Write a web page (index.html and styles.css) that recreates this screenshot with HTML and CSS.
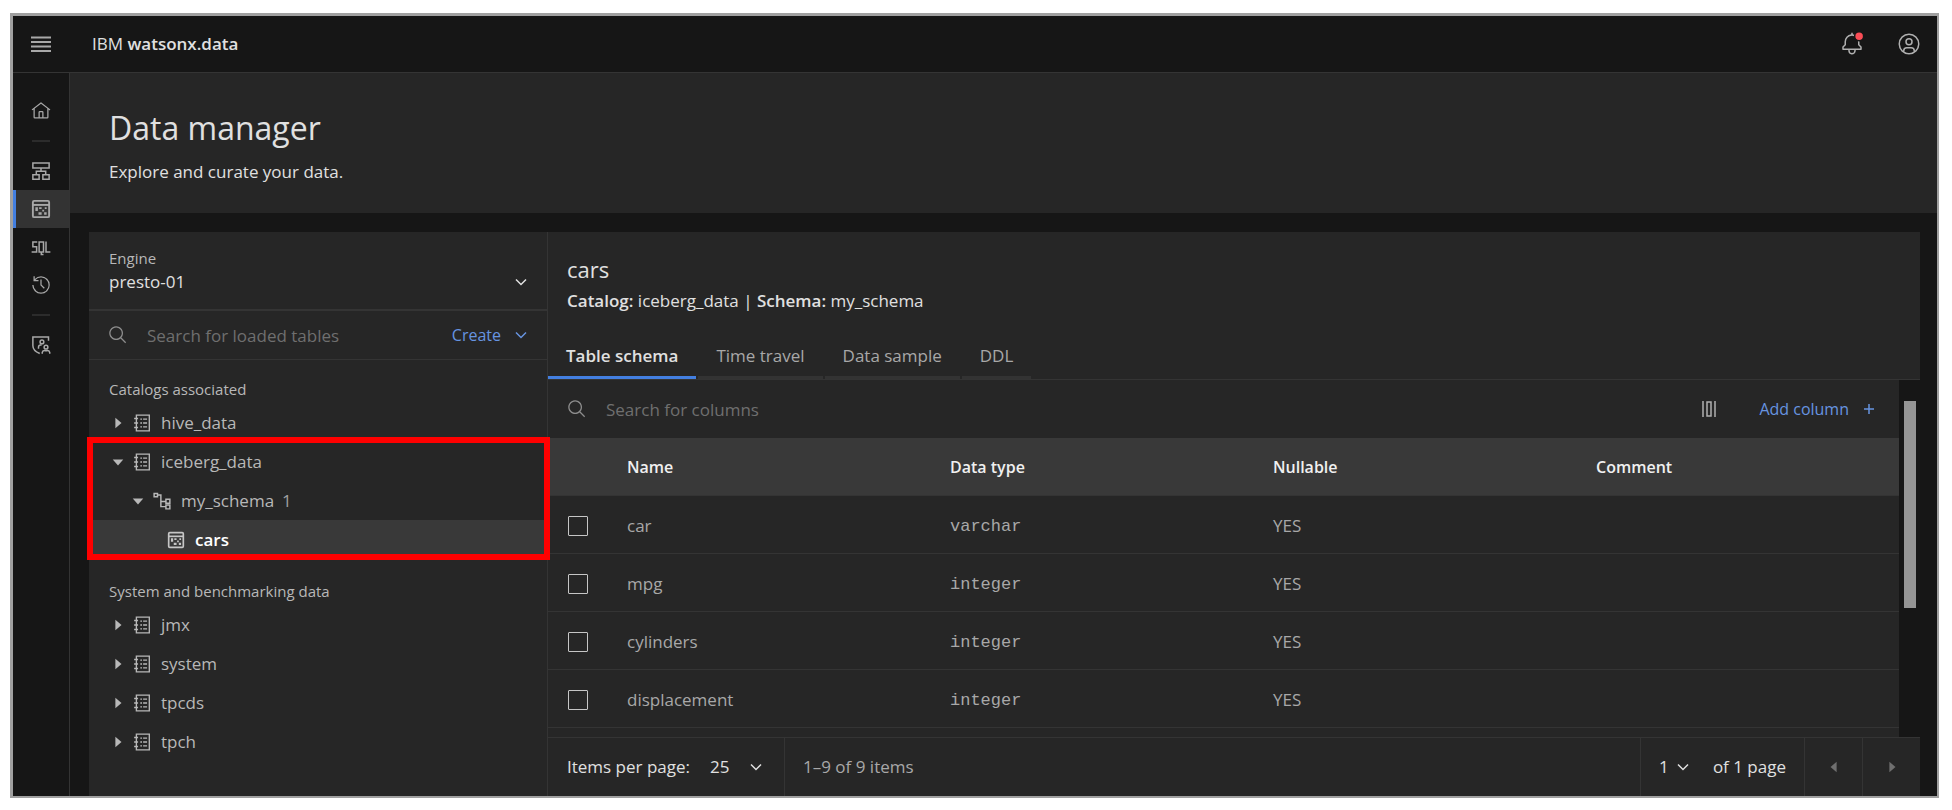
FILE: index.html
```html
<!DOCTYPE html>
<html lang="en">
<head>
<meta charset="utf-8">
<meta name="viewport" content="width=device-width, initial-scale=1">
<title>Data manager - IBM watsonx.data</title>
<link rel="stylesheet" href="styles.css">
</head>
<body>
<svg class="sprite" aria-hidden="true">
  <symbol id="i-chevron" viewBox="0 0 16 16"><path d="M3 5.500 8 10.500 13 5.500" fill="none" stroke="currentColor" stroke-width="1.500"/></symbol>
  <symbol id="i-search" viewBox="0 0 32 32"><path d="M29,27.5859l-7.5521-7.5521a11.0177,11.0177,0,1,0-1.4141,1.4141L27.5859,29ZM4,13a9,9,0,1,1,9,9A9.01,9.01,0,0,1,4,13Z"/></symbol>
  <symbol id="i-catalog" viewBox="0 0 32 32"><path d="M6 2H29V30H6Z M2 8H9 M2 16H9 M2 24H9 M13 9H16 M18 9H25 M13 16H16 M18 16H25 M13 23H16 M18 23H25" fill="none" stroke="currentColor" stroke-width="2.400"/></symbol>
  <symbol id="i-table" viewBox="0 0 32 32"><rect x="3" y="3" width="26" height="26" rx="2" fill="none" stroke="currentColor" stroke-width="3"/><path d="M3 9.500H29" stroke="currentColor" stroke-width="3"/><path d="M7 13H11V19H7Z M13 13H17V16H13Z M18 17H21V20H18Z M22 13H25V16H22Z M12 21H17V25H12Z M21 21H25V25H21Z"/></symbol>
  <symbol id="i-schema" viewBox="0 0 32 32"><path d="M2 2.500H8V8.500H2Z M8 5.500H14V26H23 M14 17H23 M23 13H30V20H23Z M23 23H30V30H23Z" fill="none" stroke="currentColor" stroke-width="2.600"/></symbol>
  <symbol id="i-right" viewBox="0 0 16 16"><path d="M5 2 12 8 5 14Z"/></symbol>
  <symbol id="i-down" viewBox="0 0 16 16"><path d="M2 5 14 5 8 12Z"/></symbol>
  <symbol id="i-left" viewBox="0 0 16 16"><path d="M11 2 4 8 11 14Z"/></symbol>
</svg>

<div class="app">
  <header class="topbar">
    <button class="topbar-menu" type="button" aria-label="Menu">
      <svg class="icon-20" viewBox="0 0 20 20"><path d="M0 3.500H20M0 8H20M0 12.500H20M0 17H20" stroke="currentColor" stroke-width="2"/></svg>
    </button>
    <a class="brand" href="#">IBM <b>watsonx.data</b></a>
    <div class="topbar-actions">
      <button class="icon-button" type="button" aria-label="Notifications">
        <svg class="icon-24" viewBox="0 0 32 32"><path d="M28.7071,19.293,26,16.5859V13a10.0136,10.0136,0,0,0-9-9.9492V1H15V3.0508A10.0136,10.0136,0,0,0,6,13v3.5859L3.2929,19.293A1,1,0,0,0,3,20v3a1,1,0,0,0,1,1h7v.7768a5.152,5.152,0,0,0,4.5,5.1987A5.0057,5.0057,0,0,0,21,25V24h7a1,1,0,0,0,1-1V20A1,1,0,0,0,28.7071,19.293ZM19,25a3,3,0,0,1-6,0V24h6Zm8-3H5V20.4141L7.707,17.707A1,1,0,0,0,8,17V13a8,8,0,0,1,16,0v4a1,1,0,0,0,.293.707L27,20.4141Z"/><circle class="dot" cx="25.500" cy="5.500" r="6"/></svg>
      </button>
      <button class="icon-button" type="button" aria-label="Account">
        <svg class="icon-24" viewBox="0 0 32 32"><path d="M16 8a5 5 0 105 5A5 5 0 0016 8zm0 8a3 3 0 113-3A3.0034 3.0034 0 0116 16z"/><path d="M16 2A14 14 0 1030 16 14.0158 14.0158 0 0016 2zM10 26.3765V25a3.0033 3.0033 0 013-3h6a3.0033 3.0033 0 013 3v1.3765a11.8989 11.8989 0 01-12 0zm13.9925-1.4507A5.0016 5.0016 0 0019 20H13a5.0016 5.0016 0 00-4.9925 4.9258 12 12 0 1115.985 0z"/></svg>
      </button>
    </div>
  </header>

  <div class="shell">
    <nav class="rail" aria-label="Main">
      <a class="rail-item" href="#" aria-label="Home"><svg class="icon-20" viewBox="0 0 32 32"><path d="M16.6123,2.2138a1.01,1.01,0,0,0-1.2427,0L1,13.4194l1.2427,1.5717L4,13.621V26a2.0041,2.0041,0,0,0,2,2H26a2.0037,2.0037,0,0,0,2-2V13.63L29.7573,15,31,13.4282ZM18,26H14V18h4Zm2,0V18a2.0023,2.0023,0,0,0-2-2H14a2.002,2.002,0,0,0-2,2v8H6V12.0615l10-7.79,10,7.8005V26Z"/></svg></a>
      <hr class="rail-line">
      <a class="rail-item" href="#" aria-label="Infrastructure manager"><svg class="icon-20" viewBox="0 0 32 32"><path d="M3 3H29V11H3Z M16 11V16.500 M8.500 22V16.500H23.500V22 M3 22H13V29H3Z M19 22H29V29H19Z" fill="none" stroke="currentColor" stroke-width="2.400"/></svg></a>
      <a class="rail-item rail-item-active" href="#" aria-label="Data manager" aria-current="page"><svg class="icon-20"><use href="#i-table"/></svg></a>
      <a class="rail-item" href="#" aria-label="Query workspace"><svg class="icon-20" viewBox="0 0 32 32"><path d="M10 8H3V15.500H9V24H1 M13 8H20V24H13Z M16.500 24V28H20 M24 7V24H31" fill="none" stroke="currentColor" stroke-width="2.400"/></svg></a>
      <a class="rail-item" href="#" aria-label="Query history"><svg class="icon-20" viewBox="0 0 32 32"><path d="M20.590 22 15 16.410V7H17V15.580L22 20.590Z"/><path d="M16 2A13.940 13.940 0 0 0 6 6.230V2H4V10H12V8H7.080A12 12 0 1 1 4 16H2A14 14 0 1 0 16 2Z"/></svg></a>
      <hr class="rail-line">
      <a class="rail-item" href="#" aria-label="Access control"><svg class="icon-20" viewBox="0 0 32 32"><path d="M28 9V3H3V17C3 23 7 26.500 14 29.500 M12 22V19.500A3.500 3.500 0 0 1 15.500 16H17 M18 30V28A4 4 0 0 1 22 25H26A4 4 0 0 1 30 28V30" fill="none" stroke="currentColor" stroke-width="2.400"/><circle cx="17.500" cy="11" r="3" fill="none" stroke="currentColor" stroke-width="2.400"/><circle cx="24" cy="19.500" r="3" fill="none" stroke="currentColor" stroke-width="2.400"/></svg></a>
    </nav>

    <main class="main">
      <div class="page-head">
        <h1 class="page-title">Data manager</h1>
        <p class="page-sub">Explore and curate your data.</p>
      </div>

      <div class="workspace">
        <aside class="side">
          <div class="engine">
            <label class="engine-label" for="engine">Engine</label>
            <div class="select-wrap">
              <select class="select" id="engine"><option>presto-01</option></select>
              <svg class="select-chevron"><use href="#i-chevron"/></svg>
            </div>
          </div>
          <div class="side-search">
            <svg class="icon-20 muted"><use href="#i-search"/></svg>
            <input class="search-input" type="search" placeholder="Search for loaded tables" aria-label="Search for loaded tables">
            <button class="link-button" type="button">Create <svg class="icon-16"><use href="#i-chevron"/></svg></button>
          </div>
          <div class="tree">
            <h2 class="tree-label">Catalogs associated</h2>
            <ul class="tree-list">
              <li><button class="node" type="button"><svg class="icon-14"><use href="#i-right"/></svg><svg class="icon-18"><use href="#i-catalog"/></svg>hive_data</button></li>
              <li class="marked">
                <button class="node" type="button"><svg class="icon-14"><use href="#i-down"/></svg><svg class="icon-18"><use href="#i-catalog"/></svg>iceberg_data</button>
                <button class="node node-2" type="button"><svg class="icon-14"><use href="#i-down"/></svg><svg class="icon-18"><use href="#i-schema"/></svg>my_schema <span class="count">1</span></button>
                <button class="node node-3" type="button"><svg class="icon-18"><use href="#i-table"/></svg>cars</button>
              </li>
            </ul>
            <h2 class="tree-label">System and benchmarking data</h2>
            <ul class="tree-list">
              <li><button class="node" type="button"><svg class="icon-14"><use href="#i-right"/></svg><svg class="icon-18"><use href="#i-catalog"/></svg>jmx</button></li>
              <li><button class="node" type="button"><svg class="icon-14"><use href="#i-right"/></svg><svg class="icon-18"><use href="#i-catalog"/></svg>system</button></li>
              <li><button class="node" type="button"><svg class="icon-14"><use href="#i-right"/></svg><svg class="icon-18"><use href="#i-catalog"/></svg>tpcds</button></li>
              <li><button class="node" type="button"><svg class="icon-14"><use href="#i-right"/></svg><svg class="icon-18"><use href="#i-catalog"/></svg>tpch</button></li>
            </ul>
          </div>
        </aside>

        <section class="detail">
          <div class="detail-head">
            <h2 class="detail-title">cars</h2>
            <p class="detail-meta"><b>Catalog:</b> iceberg_data | <b>Schema:</b> my_schema</p>
          </div>
          <div class="tabs" role="tablist">
            <button class="tab" role="tab" aria-selected="true" type="button">Table schema</button>
            <button class="tab" role="tab" aria-selected="false" type="button">Time travel</button>
            <button class="tab" role="tab" aria-selected="false" type="button">Data sample</button>
            <button class="tab" role="tab" aria-selected="false" type="button">DDL</button>
          </div>
          <div class="scroller">
            <div class="scroll-content">
              <div class="toolbar">
                <svg class="icon-20 muted"><use href="#i-search"/></svg>
                <input class="search-input" type="search" placeholder="Search for columns" aria-label="Search for columns">
                <button class="icon-button" type="button" aria-label="Column settings"><svg class="icon-16" viewBox="0 0 16 16"><path d="M2 0V16M14 0V16M6 1H10V15H6Z" fill="none" stroke="currentColor" stroke-width="1.500"/></svg></button>
                <button class="link-button add" type="button">Add column <svg class="icon-16" viewBox="0 0 16 16"><path d="M3 8H13M8 3V13" fill="none" stroke="currentColor" stroke-width="1.500"/></svg></button>
              </div>
              <table class="table">
                <thead><tr><th class="pick"></th><th>Name</th><th>Data type</th><th>Nullable</th><th>Comment</th></tr></thead>
                <tbody>
                  <tr><td class="pick"><input class="check" type="checkbox" aria-label="car"></td><td>car</td><td class="mono">varchar</td><td>YES</td><td></td></tr>
                  <tr><td class="pick"><input class="check" type="checkbox" aria-label="mpg"></td><td>mpg</td><td class="mono">integer</td><td>YES</td><td></td></tr>
                  <tr><td class="pick"><input class="check" type="checkbox" aria-label="cylinders"></td><td>cylinders</td><td class="mono">integer</td><td>YES</td><td></td></tr>
                  <tr><td class="pick"><input class="check" type="checkbox" aria-label="displacement"></td><td>displacement</td><td class="mono">integer</td><td>YES</td><td></td></tr>
                </tbody>
              </table>
            </div>
            <div class="scroll-track"><div class="scroll-thumb"></div></div>
          </div>
          <div class="pager">
            <label class="pager-label" for="size">Items per page:</label>
            <div class="select-wrap pager-size">
              <select class="select" id="size"><option>25</option></select>
              <svg class="select-chevron"><use href="#i-chevron"/></svg>
            </div>
            <span class="pager-range">1–9 of 9 items</span>
            <div class="pager-page">
              <div class="select-wrap">
                <select class="select" id="page"><option>1</option></select>
                <svg class="select-chevron"><use href="#i-chevron"/></svg>
              </div>
              <label for="page">of 1 page</label>
            </div>
            <button class="pager-step" type="button" aria-label="Previous page" disabled><svg class="icon-14"><use href="#i-left"/></svg></button>
            <button class="pager-step" type="button" aria-label="Next page" disabled><svg class="icon-14"><use href="#i-right"/></svg></button>
          </div>
        </section>
      </div>
    </main>
  </div>
</div>
</body>
</html>
```
FILE: styles.css
```css
:root {
  --bg: #161616;
  --layer: #262626;
  --layer-2: #393939;
  --line: #343434;
  --text: #e0e0e0;
  --text-2: #b8b8b8;
  --icon: #a8a8a8;
  --hint: #6f6f6f;
  --blue: #437fe0;
  --link: #6794e0;
}

* { box-sizing: border-box; }

body {
  margin: 0;
  padding: 13px 13px 12px 10px;
  height: 100vh;
  background: #fff;
  color: var(--text);
  font: 17px/20px "Open Sans", "Noto Sans", sans-serif;
}

h1, h2, p, ul { margin: 0; padding: 0; font-weight: 400; }
ul { list-style: none; }
a { color: inherit; text-decoration: none; }
b { font-weight: 600; }
svg { display: block; flex: none; fill: currentColor; }

button, input, select {
  margin: 0;
  padding: 0;
  border: 0;
  border-radius: 0;
  background: none;
  color: inherit;
  font: inherit;
}

.sprite { position: absolute; width: 0; height: 0; }
.icon-14 { width: 14px; height: 14px; }
.icon-16 { width: 16px; height: 16px; }
.icon-18 { width: 18px; height: 18px; }
.icon-20 { width: 20px; height: 20px; }
.icon-24 { width: 24px; height: 24px; }
.muted { color: #8d8d8d; }

.app {
  display: flex;
  flex-direction: column;
  height: 100%;
  border: 2px solid #a0a0a0;
  border-width: 3px 2px 2px 3px;
  background: var(--bg);
}

.topbar {
  display: flex;
  align-items: center;
  height: 57px;
  flex: none;
  border-bottom: 1px solid var(--line);
}
.topbar-menu {
  display: grid;
  place-items: center;
  width: 56px;
  height: 56px;
  color: #a8a8a8;
}
.brand { margin-left: 23px; }
.topbar-actions { display: flex; gap: 33px; margin-left: auto; padding-right: 16px; }
.icon-button { display: grid; place-items: center; color: #b0b0b0; }
.dot { fill: #fa4d56; stroke: var(--bg); stroke-width: 2; }

.shell { display: flex; flex: 1; min-height: 0; }
.rail {
  display: flex;
  flex-direction: column;
  width: 57px;
  flex: none;
  padding-top: 19px;
  border-right: 1px solid var(--line);
  color: var(--icon);
}
.rail-item { display: grid; place-items: center; height: 38px; }
.rail-item-active { background: #333; box-shadow: inset 3px 0 var(--blue); }
.rail-line { width: 18px; margin: 10px auto; border: 0; border-top: 2px solid #2c2c2c; }

.main { display: flex; flex-direction: column; flex: 1; min-width: 0; }
.page-head { padding: 31px 39px 27px; background: var(--layer); }
.page-title { font-size: 32px; line-height: 48px; }
.page-sub { margin-top: 6px; line-height: 28px; }

.workspace {
  display: flex;
  flex: 1;
  min-height: 0;
  margin: 19px 17px 0 19px;
  background: var(--layer);
}

.side { width: 459px; flex: none; border-right: 1px solid var(--line); }
.engine { padding: 16px 18px 13px 20px; border-bottom: 2px solid var(--line); }
.engine-label { display: block; font-size: 15px; color: var(--text-2); }
.select-wrap { display: grid; align-items: center; }
.select-wrap > * { grid-area: 1 / 1; }
.select { width: 100%; height: 28px; appearance: none; }
.select-chevron { width: 16px; height: 16px; justify-self: end; pointer-events: none; }

.side-search {
  display: flex;
  align-items: center;
  height: 49px;
  padding: 0 18px 0 19px;
  border-bottom: 1px solid var(--line);
}
.search-input { flex: 1; min-width: 0; margin-left: 19px; height: 32px; outline: 0; }
.search-input::placeholder { color: var(--hint); opacity: 1; }
.link-button { display: flex; align-items: center; gap: 12px; font-size: 16px; color: var(--link); }

.tree-label { padding-left: 20px; font-size: 15px; line-height: 20px; color: var(--text-2); }
.tree { padding-top: 19px; }
.tree-list { padding: 4px 0 22px; }
.node {
  display: flex;
  align-items: center;
  width: 100%;
  height: 39px;
  padding-left: 22px;
  color: var(--text-2);
}
.node .icon-14 { margin-right: 8px; }
.node .icon-18 { margin-right: 10px; }
.node-2 { padding-left: 42px; }
.node-3 { padding-left: 78px; background: var(--layer-2); color: #fff; font-weight: 600; }
.node-3 .icon-18 { color: #c6c6c6; }
.count { margin-left: 8px; color: #a0a0a0; }
.marked { position: relative; }
.marked::after {
  content: "";
  position: absolute;
  inset: -5px -3px -1px -2px;
  border: 6px solid #f00;
  pointer-events: none;
  z-index: 1;
}

.detail { display: flex; flex-direction: column; flex: 1; min-width: 0; }
.detail-head { padding: 23px 19px 21px; }
.detail-title { font-size: 22px; line-height: 28px; }
.detail-meta { margin-top: 8px; }
.tabs { display: flex; gap: 2px; height: 48px; flex: none; border-bottom: 1px solid var(--line); }
.tab { padding: 4px 18px 0; border-bottom: 3px solid #333; color: #a8a8a8; }
.tab[aria-selected="true"] { border-color: var(--blue); color: var(--text); font-weight: 600; }

.scroller { display: flex; flex: 1; min-height: 0; }
.scroll-content { flex: 1; min-width: 0; overflow: hidden; }
.scroll-track { width: 21px; padding: 21px 4px 129px 5px; background: var(--bg); }
.scroll-thumb { height: 100%; background: #959595; }

.toolbar { display: flex; align-items: center; height: 58px; padding: 0 22px 0 19px; }
.add { margin-left: 42px; }
.table { width: 100%; table-layout: fixed; border-collapse: separate; border-spacing: 0; }
.table th, .table td {
  height: 58px;
  padding: 2px 20px 0;
  border-bottom: 1px solid var(--line);
  text-align: left;
  color: #a8a8a8;
}
.table th { padding-top: 0; background: var(--layer-2); color: #f0f0f0; font-size: 16px; font-weight: 600; }
.table .pick { width: 59px; padding: 2px 0 0 20px; }
.table .mono { padding-top: 5px; font-family: "Liberation Mono", monospace; }
.check {
  display: block;
  width: 20px;
  height: 20px;
  appearance: none;
  border: 1px solid #c6c6c6;
  border-radius: 1px;
}

.pager {
  display: flex;
  align-items: center;
  height: 59px;
  flex: none;
  border-top: 1px solid var(--line);
}
.pager-label { padding-left: 19px; }
.pager-size { width: 95px; height: 100%; padding: 0 20px; border-right: 1px solid var(--line); }
.pager-range { padding-left: 18px; color: #a8a8a8; }
.pager-page {
  display: flex;
  align-items: center;
  gap: 22px;
  height: 100%;
  margin-left: auto;
  padding: 0 18px;
  border-left: 1px solid var(--line);
}
.pager-page .select-wrap { width: 32px; }
.pager-step {
  display: grid;
  place-items: center;
  width: 58px;
  height: 100%;
  border-left: 1px solid var(--line);
  color: var(--hint);
}
```
